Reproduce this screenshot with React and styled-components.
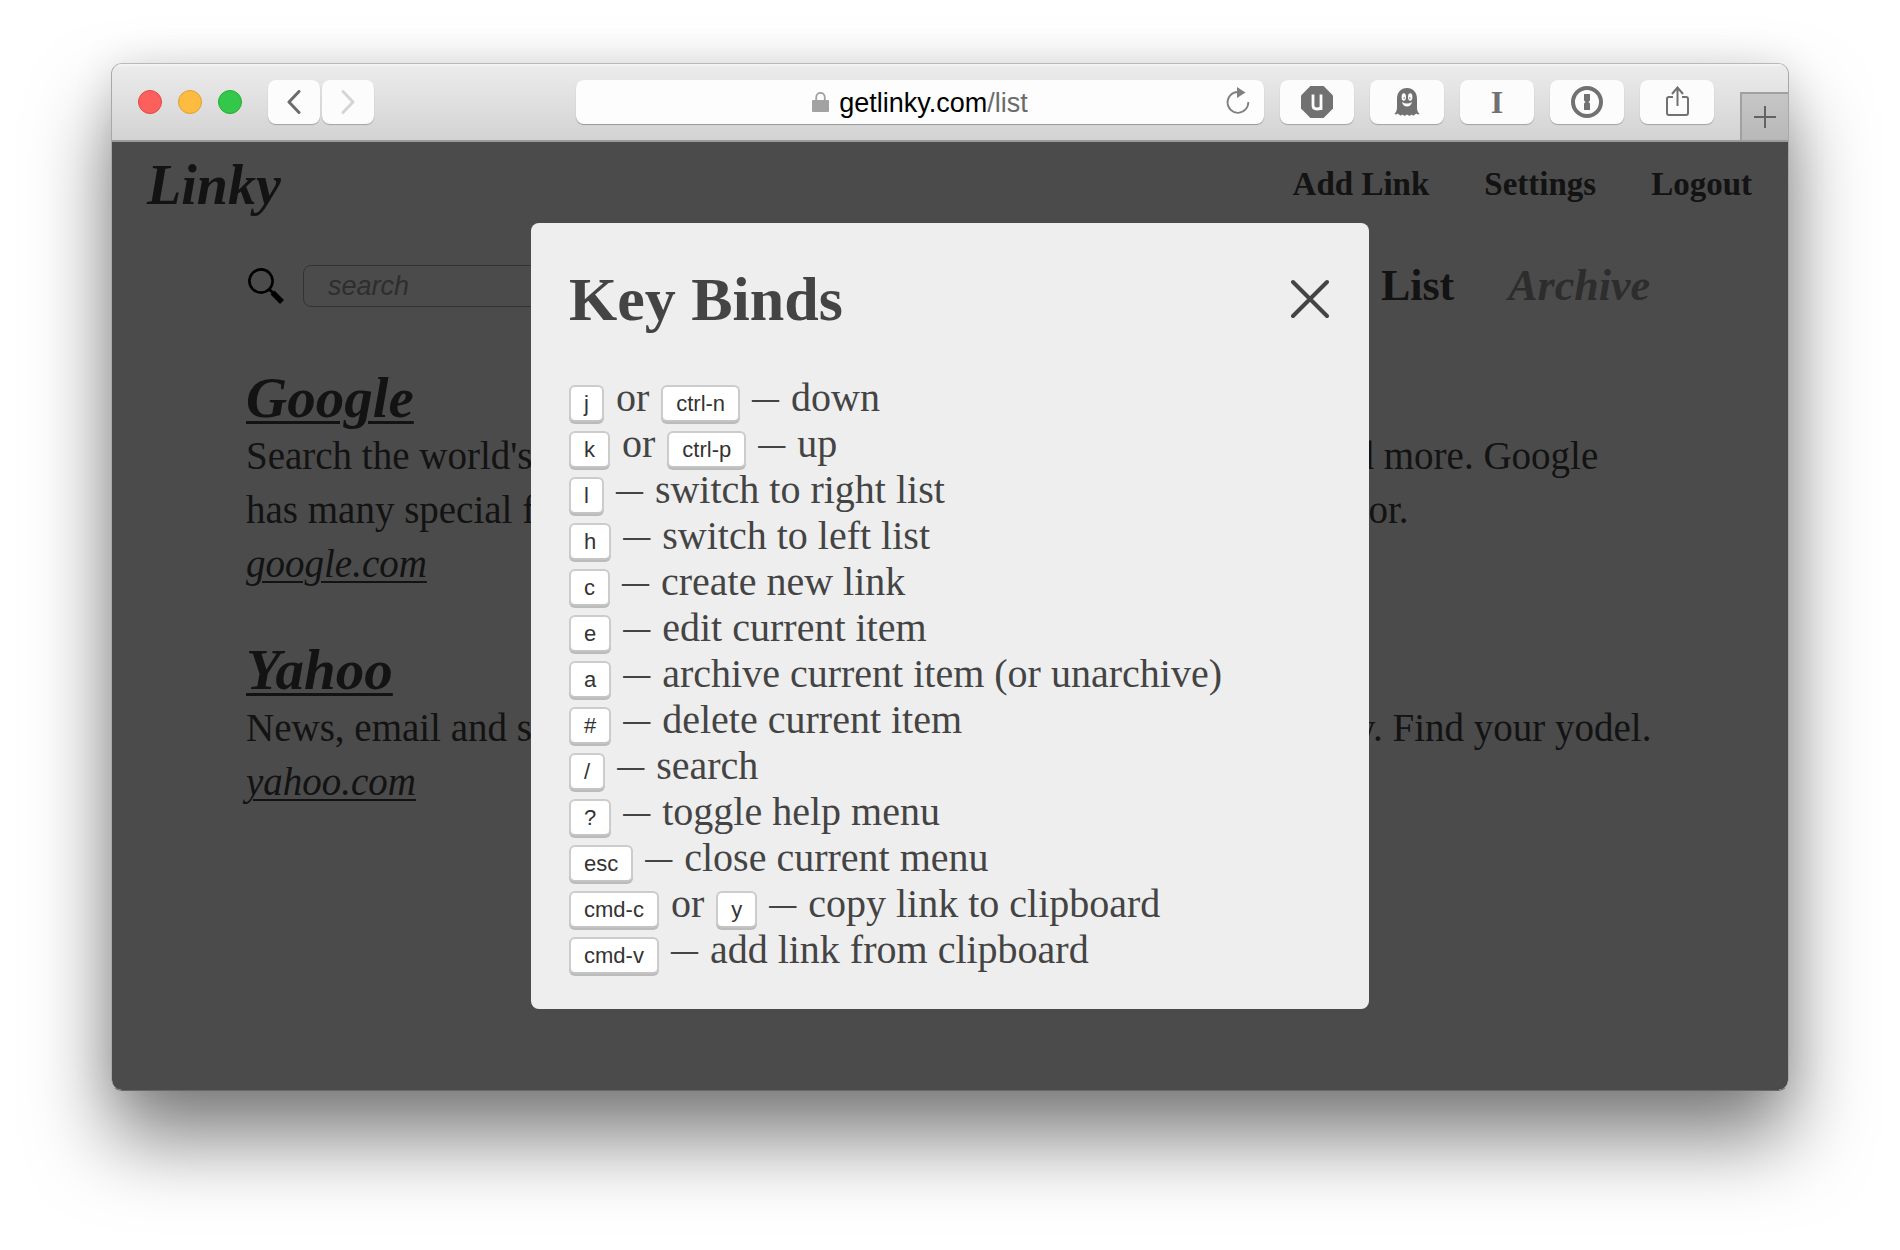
import React, { useState } from "react";
import styled, { createGlobalStyle } from "styled-components";

const serif = `"Liberation Serif", "Times New Roman", serif`;
const sans = `"Liberation Sans", Arial, sans-serif`;

const GlobalStyle = createGlobalStyle`
  * { box-sizing: border-box; }
  body { margin: 0; background: #fff; }
  h1, h2, h3, p, ul { margin: 0; padding: 0; }
  button, input { font: inherit; }
  svg { display: block; }
`;

const Desktop = styled.div`
  min-height: 100vh;
  display: flex;
  padding: 63px 111px 159px;
`;

const Window = styled.div`
  flex: 1;
  display: flex;
  flex-direction: column;
  border: 1px solid #a8a8a8;
  border-top-color: #b8b8b8;
  border-bottom-color: #686868;
  border-radius: 11px;
  overflow: hidden;
  box-shadow: 0 48px 80px rgba(0, 0, 0, 0.5), 0 0 40px rgba(0, 0, 0, 0.1);
`;

const Toolbar = styled.header`
  display: flex;
  align-items: stretch;
  height: 78px;
  border-bottom: 2px solid #9b9b9b;
  background: linear-gradient(#f6f6f6, #ebebeb 3px, #d3d3d3);
`;

const ToolbarMain = styled.div`
  flex: 1;
  display: flex;
  align-items: center;
  padding: 0 26px;
`;

const Lights = styled.div`
  display: flex;
  gap: 16px;
  margin-right: 26px;
`;

const Light = styled.button`
  width: 24px;
  height: 24px;
  padding: 0;
  border: 1px solid ${(p) => p.$edge};
  border-radius: 50%;
  background: ${(p) => p.$fill};
`;

const ToolButton = styled.button`
  display: flex;
  align-items: center;
  justify-content: center;
  width: ${(p) => (p.$narrow ? 52 : 74)}px;
  height: 44px;
  padding: 0;
  border: 0;
  border-radius: 8px;
  background: #fcfcfc;
  box-shadow: 0 1px 1px rgba(0, 0, 0, 0.25);
  color: #717171;
`;

const History = styled.nav`
  display: flex;
  gap: 2px;
`;

const AddressBar = styled.div`
  flex: 1;
  display: grid;
  grid-template-columns: 1fr auto 1fr;
  align-items: center;
  height: 44px;
  margin: 0 16px 0 202px;
  padding: 0 14px;
  border-radius: 8px;
  background: #fdfdfd;
  box-shadow: 0 1px 1px rgba(0, 0, 0, 0.3);
`;

const Address = styled.div`
  grid-column: 2;
  display: flex;
  align-items: center;
  gap: 10px;
  font: 27px/32px ${sans};
  color: #000;
`;

const AddressText = styled.span`
  padding-top: 2px;
`;

const Path = styled.span`
  color: #6b6b6b;
`;

const Reload = styled.button`
  justify-self: end;
  padding: 0;
  border: 0;
  background: none;
  color: #808080;
`;

const Extensions = styled.div`
  display: flex;
  gap: 16px;
`;

const SerifMark = styled.span`
  font: bold 32px/40px ${serif};
`;

const NewTab = styled.button`
  align-self: flex-end;
  display: flex;
  align-items: center;
  justify-content: center;
  width: 48px;
  height: 48px;
  padding: 0;
  border: solid #a0a0a0;
  border-width: 2px 0 0 2px;
  background: linear-gradient(#c6c6c6, #b8b8b8);
  color: #636363;
`;

const Page = styled.div`
  position: relative;
  flex: 1;
  padding: 15px 36px 0 35px;
  background: #fafafa;
  color: #404040;
  font: 39px/54px ${serif};
`;

const SiteHeader = styled.header`
  display: flex;
  align-items: center;
  justify-content: space-between;
`;

const Brand = styled.h1`
  font: italic bold 56px/56px ${serif};
`;

const SiteNav = styled.nav`
  display: flex;
  gap: 55px;
  padding-bottom: 2px;
  font: bold 33px/40px ${serif};
`;

const NavLink = styled.a`
  color: inherit;
  text-decoration: none;
`;

const Main = styled.main`
  padding: 46px 100px 0 99px;
`;

const ListBar = styled.div`
  display: flex;
  align-items: center;
  height: 54px;
`;

const SearchLabel = styled.label`
  margin: 0 19px 0 2px;
  color: #000;
`;

const SearchInput = styled.input`
  width: 520px;
  height: 42px;
  padding: 0 24px;
  border: 1px solid #aaa;
  border-radius: 8px;
  background: transparent;
  font: italic 27px/32px ${sans};
  &::placeholder {
    color: #9c9c9c;
    opacity: 1;
  }
`;

const ListTabs = styled.nav`
  display: flex;
  gap: 54px;
  margin-left: auto;
  padding-right: 2px;
  font: bold 44px/54px ${serif};
`;

const ListTab = styled.a`
  color: ${(p) => (p.$active ? "inherit" : "#969696")};
  font-style: ${(p) => (p.$active ? "normal" : "italic")};
  text-decoration: none;
`;

const Items = styled.div`
  display: grid;
  gap: 52px;
  padding-top: 58px;
`;

const ItemTitle = styled.h2`
  padding-bottom: 4px;
  font: italic bold 57px/54px ${serif};
`;

const ItemLink = styled.a`
  color: inherit;
  font-style: italic;
  text-decoration-thickness: ${(p) => (p.$thick ? 3 : 2)}px;
  text-underline-offset: 4px;
`;

const Overlay = styled.div`
  position: absolute;
  inset: 0;
  display: flex;
  align-items: flex-start;
  justify-content: center;
  padding-top: 81px;
  background: rgba(0, 0, 0, 0.7);
`;

const Modal = styled.section`
  flex: 0 1 838px;
  padding: 40px 38px 36px;
  border-radius: 8px;
  background: #eee;
  color: #444;
`;

const ModalHeader = styled.div`
  display: flex;
  align-items: center;
  justify-content: space-between;
  margin-bottom: 40px;
`;

const ModalTitle = styled.h2`
  font: bold 62px/72px ${serif};
`;

const Close = styled.button`
  padding: 0;
  border: 0;
  background: none;
  color: #444;
`;

const Bindings = styled.ul`
  list-style: none;
  font-size: 40px;
  line-height: 46px;
`;

const Binding = styled.li`
  display: flex;
  align-items: baseline;
  gap: 12px;
  height: 46px;
  white-space: nowrap;
`;

const Key = styled.kbd`
  padding: 0 13px;
  border: 2px solid #ccc;
  border-bottom-color: #c4c4c4;
  border-radius: 6px;
  background: #fff;
  box-shadow: 0 2px 0 #bbb;
  color: #333;
  font: 22px/33px ${sans};
`;

const Dash = styled.span`
  align-self: center;
  font-size: 27px;
  font-weight: bold;
`;

const BINDINGS = [
  [["j", "ctrl-n"], "down"],
  [["k", "ctrl-p"], "up"],
  [["l"], "switch to right list"],
  [["h"], "switch to left list"],
  [["c"], "create new link"],
  [["e"], "edit current item"],
  [["a"], "archive current item (or unarchive)"],
  [["#"], "delete current item"],
  [["/"], "search"],
  [["?"], "toggle help menu"],
  [["esc"], "close current menu"],
  [["cmd-c", "y"], "copy link to clipboard"],
  [["cmd-v"], "add link from clipboard"],
];

const LINKS = [
  {
    title: "Google",
    host: "google.com",
    text: "Search the world's information, including webpages, images, videos and more. Google has many special features to help you find exactly what you're looking for.",
  },
  {
    title: "Yahoo",
    host: "yahoo.com",
    text: "News, email and search are just the beginning. Discover more every day. Find your yodel.",
  },
];

const Chevron = ({ flip, color }) => (
  <svg width="14" height="24" viewBox="0 0 14 24" fill="none" stroke={color} strokeWidth="3" strokeLinecap="round" strokeLinejoin="round">
    <path d={flip ? "M2 1.5 12 12 2 22.5" : "M12 1.5 2 12 12 22.5"} />
  </svg>
);

const LockIcon = () => (
  <svg width="17" height="20" viewBox="0 0 17 20">
    <path d="M4.2 9V5.5a4.2 4.6 0 0 1 8.6 0V9" fill="none" stroke="#a2a2a2" strokeWidth="1.8" />
    <rect y="8" width="17" height="12" rx="1" fill="#a2a2a2" />
  </svg>
);

const ReloadIcon = () => (
  <svg width="24" height="30" viewBox="0 0 24 30">
    <path d="M11.5 5A10.4 10.4 0 1 0 22.3 15" fill="none" stroke="currentColor" strokeWidth="1.8" />
    <path d="M11 0 19.5 5.4 11 11z" fill="currentColor" />
  </svg>
);

const ShieldIcon = () => (
  <svg width="32" height="32" viewBox="0 0 32 32">
    <path d="M9.4 0h13.2L32 9.4v13.2L22.6 32H9.4L0 22.6V9.4z" fill="currentColor" />
    <path d="M12 8.500V19.500q0 3.500 4 3.500t4-2.500V8.500M20 19v5" fill="none" stroke="#fcfcfc" strokeWidth="2.800" />
  </svg>
);

const GhostIcon = () => (
  <svg width="26" height="29" viewBox="0 0 26 29">
    <path d="M3 11C3 4 7 0 13 0s10 4 10 11v8c0 4 1 5 2.600 7-1.400.6-2.600.6-3.600-.4-1.300 2-3.200 2.400-4.600.8-1.300 1.600-3 1.600-4.400.2-1.400 1.400-3.100 1.400-4.400-.2-1.400 1.600-3.300 1.200-4.600-.8-1 1-2.200 1-3.600.4C2 24 3 23 3 19z" fill="currentColor" />
    <ellipse cx="9.800" cy="9" rx="2.200" ry="3.800" fill="#fcfcfc" />
    <ellipse cx="16.200" cy="9" rx="2.200" ry="3.800" fill="#fcfcfc" />
    <circle cx="10.200" cy="10" r=".8" fill="currentColor" />
    <circle cx="15.800" cy="10" r=".8" fill="currentColor" />
    <path d="M8 14q5 3 10 0-1.200 4.500-5 4.500T8 14" fill="#fcfcfc" />
  </svg>
);

const KeyholeIcon = () => (
  <svg width="32" height="32" viewBox="0 0 32 32">
    <circle cx="16" cy="16" r="14" fill="none" stroke="currentColor" strokeWidth="4" />
    <path d="M13 8h6v6.500l-1.500 1.500 1.500 1.500V24h-6v-6.500l1.500-1.500-1.500-1.500z" fill="currentColor" />
  </svg>
);

const ShareIcon = () => (
  <svg width="24" height="32" viewBox="0 0 24 32" fill="none" stroke="currentColor" strokeWidth="2">
    <path d="M8 11H4q-2 0-2 2v14q0 2 2 2h17q2 0 2-2V13q0-2-2-2h-4M12.500 20V2M7 8 12.500 1.500 18 8" />
  </svg>
);

const PlusIcon = () => (
  <svg width="22" height="22" viewBox="0 0 22 22" stroke="currentColor" strokeWidth="2">
    <path d="M0 11h22M11 0v22" />
  </svg>
);

const SearchIcon = () => (
  <svg width="36" height="36" viewBox="0 0 36 36" fill="none" stroke="currentColor">
    <circle cx="13" cy="13" r="11.600" strokeWidth="2.600" />
    <path d="m21 21 5 5" strokeWidth="3" />
    <path d="m24.500 24.500 9.500 9.500" strokeWidth="5.500" />
  </svg>
);

const CloseIcon = () => (
  <svg width="40" height="40" viewBox="0 0 40 40" stroke="currentColor" strokeWidth="4" strokeLinecap="round">
    <path d="m2 3 34 34M36 3 2 37" />
  </svg>
);

export default function App() {
  const [open, setOpen] = useState(true);
  return (
    <Desktop>
      <GlobalStyle />
      <Window>
        <Toolbar>
          <ToolbarMain>
            <Lights>
              <Light aria-label="Close window" $fill="#fc605c" $edge="#e2463f" />
              <Light aria-label="Minimize window" $fill="#fdbc40" $edge="#dfa033" />
              <Light aria-label="Zoom window" $fill="#34c84a" $edge="#26ab35" />
            </Lights>
            <History>
              <ToolButton $narrow aria-label="Back"><Chevron color="#6b6b6b" /></ToolButton>
              <ToolButton $narrow aria-label="Forward"><Chevron flip color="#d5d5d5" /></ToolButton>
            </History>
            <AddressBar>
              <Address>
                <LockIcon />
                <AddressText>getlinky.com<Path>/list</Path></AddressText>
              </Address>
              <Reload aria-label="Reload"><ReloadIcon /></Reload>
            </AddressBar>
            <Extensions>
              <ToolButton aria-label="Content blocker"><ShieldIcon /></ToolButton>
              <ToolButton aria-label="Tracker blocker"><GhostIcon /></ToolButton>
              <ToolButton><SerifMark>I</SerifMark></ToolButton>
              <ToolButton aria-label="Passwords"><KeyholeIcon /></ToolButton>
              <ToolButton aria-label="Share"><ShareIcon /></ToolButton>
            </Extensions>
          </ToolbarMain>
          <NewTab aria-label="New tab"><PlusIcon /></NewTab>
        </Toolbar>
        <Page>
          <SiteHeader>
            <Brand>Linky</Brand>
            <SiteNav>
              <NavLink href="#add">Add Link</NavLink>
              <NavLink href="#settings">Settings</NavLink>
              <NavLink href="#logout">Logout</NavLink>
            </SiteNav>
          </SiteHeader>
          <Main>
            <ListBar>
              <SearchLabel htmlFor="search" aria-label="Search"><SearchIcon /></SearchLabel>
              <SearchInput id="search" placeholder="search" />
              <ListTabs>
                <ListTab href="#list" $active>List</ListTab>
                <ListTab href="#archive">Archive</ListTab>
              </ListTabs>
            </ListBar>
            <Items>
              {LINKS.map((link) => (
                <article key={link.host}>
                  <ItemTitle><ItemLink $thick href={"#" + link.host}>{link.title}</ItemLink></ItemTitle>
                  <p>{link.text}</p>
                  <ItemLink href={"#" + link.host}>{link.host}</ItemLink>
                </article>
              ))}
            </Items>
          </Main>
          {open && (
            <Overlay>
              <Modal role="dialog" aria-labelledby="key-binds">
                <ModalHeader>
                  <ModalTitle id="key-binds">Key Binds</ModalTitle>
                  <Close aria-label="Close" onClick={() => setOpen(false)}><CloseIcon /></Close>
                </ModalHeader>
                <Bindings>
                  {BINDINGS.map(([keys, action]) => (
                    <Binding key={action}>
                      {keys.map((k, i) => (
                        <React.Fragment key={k}>
                          {i > 0 && <span>or</span>}
                          <Key>{k}</Key>
                        </React.Fragment>
                      ))}
                      <Dash>—</Dash>
                      <span>{action}</span>
                    </Binding>
                  ))}
                </Bindings>
              </Modal>
            </Overlay>
          )}
        </Page>
      </Window>
    </Desktop>
  );
}
